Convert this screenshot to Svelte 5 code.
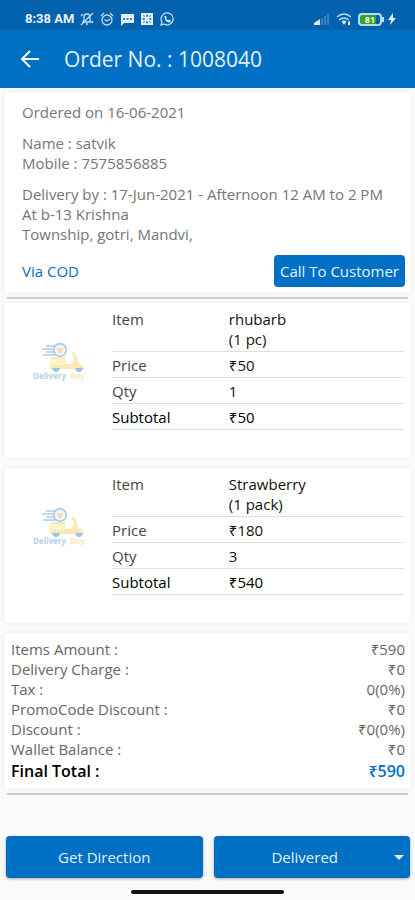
<script lang="ts">
  const items = [
    { name: 'rhubarb', unit: '(1 pc)', price: 50, qty: 1 },
    { name: 'Strawberry', unit: '(1 pack)', price: 180, qty: 3 }
  ];

  const totals = [
    { label: 'Items Amount :', value: '₹590' },
    { label: 'Delivery Charge :', value: '₹0' },
    { label: 'Tax :', value: '0(0%)' },
    { label: 'PromoCode Discount :', value: '₹0' },
    { label: 'Discount :', value: '₹0(0%)' },
    { label: 'Wallet Balance :', value: '₹0' }
  ];

  const statuses = ['Received', 'Processed', 'Shipped', 'Delivered', 'Cancelled'];
  let status = $state('Delivered');
</script>

{#snippet logo()}
  <svg class="logo" viewBox="0 0 54 40" aria-hidden="true">
    <g fill="none" stroke="#a9cdee" stroke-width="1.4">
      <path d="M13 4h10q-3 4 0 9H10M9 7h11M13 10h7" />
      <circle cx="27" cy="8" r="6.3" fill="#f1f8fe" stroke-width="1.8" />
    </g>
    <path d="M24 6q2-1 3 1 2-2 3 0 0 2-3 5-3-2-3-6z" fill="#f9dda0" />
    <path d="M18 15h14v7h6l3-4-2-7q-1-2 1-1 5 3 5 11 6 2 6 6H17v-4q0-5 1-8z" fill="#fce8b6" />
    <path d="M18 17h13v6H17z" fill="#fdf3cc" />
    <path d="M19 26h8q-1 4-4 4t-4-4zM42 26h8q-1 4-4 4t-4-4z" fill="#9cc4e6" />
    <text x="0" y="37" fill="#b4cfe8">Delivery</text>
    <text x="37" y="37" fill="#fbe9bd">Boy</text>
  </svg>
{/snippet}

<div class="screen">
  <div class="status-bar">
    <span class="time">8:38 AM</span>
    <svg class="icon" viewBox="0 0 14 14" aria-hidden="true">
      <path d="M3 10h8l-1-2V5q0-3-3-3T4 5v3zM6 12h2M1 13 13 1M1 4l2-2M13 9l-1 2" />
    </svg>
    <svg class="icon" viewBox="0 0 14 14" aria-hidden="true">
      <circle cx="7" cy="8" r="5" />
      <path d="M1 4l3-3M13 4l-3-3M4.500 7.500 7 9l3-2" />
    </svg>
    <svg class="icon" viewBox="0 0 14 14" aria-hidden="true">
      <path class="solid" d="M1 2h13v9H4l-3 3z" />
      <path class="cut" d="M3 7h2M6.500 7h2M10 7h2" />
    </svg>
    <svg class="icon" viewBox="0 0 14 14" aria-hidden="true">
      <path class="solid" d="M1 1h12v12H1z" />
      <path class="hole" d="M7 2l1 2-1 1-1-1zM7 9l1 1-1 2-1-2zM2 7l2-1 1 1-1 1zM12 7l-2-1-1 1 1 1zM3 3l2 1-1 1zM11 3l-1 2-1-1zM3 11l1-2 1 1zM11 11l-2-1 1-1z" />
    </svg>
    <svg class="icon" viewBox="0 0 14 14" aria-hidden="true">
      <path d="M1 13l1-3a6 6 0 1 1 2 2z" />
      <path class="solid" d="M4.500 4l1.300-.3 1 2-.7.8q.7 1.300 2 1.900l.8-.8 1.900 1q-.2 2-2 1.900Q4.500 9.500 4.500 4z" />
    </svg>
    <span class="spacer"></span>
    <svg class="signal" viewBox="0 0 17 14" aria-hidden="true">
      <path d="M1 13v-2l6-4v6z" fill="#d9e9f5" />
      <path d="M8 13V6h2v7zM11 13V4h2v9zM14 13V2h2v11z" fill="#3a80b9" />
    </svg>
    <svg class="wifi" viewBox="0 0 16 14" aria-hidden="true">
      <path d="M1 5q7-6 14 0M3 8q5-4 10 0M6 10q2-2 4 0" />
      <path class="solid" d="M6 10h4l-2 3zM12 10l2-1v4h-2z" />
    </svg>
    <span class="battery">81</span>
    <svg class="bolt" viewBox="0 0 8 12" aria-hidden="true">
      <path d="M5 0 0 7h3l-1 5 6-7H5z" fill="#e4f1fa" />
    </svg>
  </div>

  <header>
    <button class="back" type="button" aria-label="Back">
      <svg viewBox="0 0 20 20" aria-hidden="true">
        <path d="M19 10H3M10 2 2 10l8 8" />
      </svg>
    </button>
    <h1>Order No. : 1008040</h1>
  </header>

  <main>
    <section class="card details">
      <p>Ordered on 16-06-2021</p>
      <p>Name : satvik<br />Mobile : 7575856885</p>
      <p>
        Delivery by : 17-Jun-2021 - Afternoon 12 AM to 2 PM<br />
        At b-13 Krishna<br />
        Township, gotri, Mandvi,
      </p>
      <div class="payment">
        <span>Via COD</span>
        <button class="call" type="button">Call To Customer</button>
      </div>
    </section>

    <hr />

    {#each items as item}
      <section class="card item">
        <div class="photo">{@render logo()}</div>
        <table>
          <tbody>
            <tr>
              <th>Item</th>
              <td>{item.name}<br />{item.unit}</td>
            </tr>
            <tr>
              <th>Price</th>
              <td>₹{item.price}</td>
            </tr>
            <tr>
              <th>Qty</th>
              <td>{item.qty}</td>
            </tr>
            <tr class="subtotal">
              <th>Subtotal</th>
              <td>₹{item.price * item.qty}</td>
            </tr>
          </tbody>
        </table>
      </section>
    {/each}

    <section class="card totals">
      <dl>
        {#each totals as row}
          <div>
            <dt>{row.label}</dt>
            <dd>{row.value}</dd>
          </div>
        {/each}
        <div class="final">
          <dt>Final Total :</dt>
          <dd>₹590</dd>
        </div>
      </dl>
    </section>

    <hr />
  </main>

  <footer>
    <button class="action" type="button">Get Direction</button>
    <div class="select">
      <select class="action" bind:value={status} aria-label="Order status">
        {#each statuses as option}
          <option>{option}</option>
        {/each}
      </select>
      <span class="caret"></span>
    </div>
  </footer>
  <div class="home-bar"></div>
</div>

<style>
  :global(body) {
    background: #fafafa;
  }
  .screen {
    display: flex;
    flex-direction: column;
    min-height: 100vh;
    font-family: 'Open Sans', 'Noto Sans', sans-serif;
    font-size: 15px;
    line-height: 20px;
    color: #757575;
  }
  button,
  select {
    border: none;
    font: inherit;
    cursor: pointer;
  }

  .status-bar {
    display: flex;
    align-items: center;
    gap: 6px;
    height: 22px;
    padding: 8px 19px 0 25px;
    background: #0362ae;
    color: #e4f1fa;
  }
  .time {
    font-family: Roboto, sans-serif;
    font-size: 13px;
    font-weight: 700;
  }
  .icon {
    width: 14px;
    height: 14px;
  }
  .icon path,
  .icon circle,
  .wifi path {
    fill: none;
    stroke: #c3ddf0;
    stroke-width: 1.3;
  }
  .icon .solid,
  .wifi .solid {
    fill: #e4f1fa;
    stroke: none;
  }
  .icon .cut {
    stroke: #0362ae;
  }
  .icon .hole {
    fill: #0362ae;
    stroke: none;
  }
  .spacer {
    flex: 1;
  }
  .signal {
    width: 17px;
    height: 14px;
  }
  .wifi {
    width: 16px;
    height: 14px;
  }
  .battery {
    position: relative;
    width: 20px;
    height: 9px;
    border: 2px solid #b8dcec;
    border-radius: 4px;
    background: linear-gradient(90deg, #35a02f 80%, #0362ae 80%);
    color: #f4ffe8;
    font-size: 9px;
    font-weight: 700;
    line-height: 9px;
    text-align: center;
  }
  .battery::after {
    content: '';
    position: absolute;
    top: 2px;
    right: -4px;
    width: 2px;
    height: 5px;
    background: #b8dcec;
  }
  .bolt {
    width: 8px;
    height: 12px;
  }

  header {
    display: flex;
    align-items: center;
    gap: 24px;
    height: 58px;
    padding: 0 20px;
    background: #0070c4;
    color: #e4f1fb;
  }
  .back {
    display: flex;
    padding: 0;
    background: none;
  }
  .back svg {
    width: 20px;
    height: 20px;
    fill: none;
    stroke: #fff;
    stroke-width: 2;
  }
  h1 {
    margin: 0;
    font-size: 21px;
    font-weight: 400;
    line-height: 28px;
  }

  main {
    padding: 4px 4px 0;
  }
  .card {
    border-radius: 4px;
    background: #fff;
    box-shadow: 0 0 4px rgba(0, 0, 0, 0.07);
  }
  hr {
    height: 2px;
    margin: 4px 3px;
    border: none;
    background: #cbcbcb;
  }
  .details {
    padding: 10px 6px 6px 18px;
  }
  .details p {
    margin: 0 0 11px;
  }
  .payment {
    display: flex;
    align-items: center;
    justify-content: space-between;
    color: #0070c4;
  }
  .call {
    height: 32px;
    padding: 0 6px;
    border-radius: 4px;
    background: #0070c4;
    color: #e4f1fb;
  }

  .item {
    display: flex;
    margin-bottom: 10px;
    padding: 3px 7px 28px 29px;
  }
  .photo {
    width: 79px;
    padding-top: 36px;
  }
  .logo {
    display: block;
    width: 54px;
    height: 40px;
  }
  .logo text {
    font-family: 'Open Sans', sans-serif;
    font-size: 8px;
    font-weight: 700;
  }
  table {
    flex: 1;
    table-layout: fixed;
    border-spacing: 0;
  }
  th,
  td {
    padding: 3px 0 2px;
    border-bottom: 1px solid #dedede;
    font-weight: 400;
    text-align: left;
    vertical-align: top;
  }
  th {
    width: 40%;
    color: #444;
  }
  td {
    color: #111;
  }
  .subtotal th,
  .subtotal td {
    color: #000;
  }

  .totals {
    padding: 6px 6px 6px 7px;
    color: #666;
  }
  dl,
  dd {
    margin: 0;
  }
  dl div {
    display: flex;
    justify-content: space-between;
  }
  .final {
    color: #000;
    font-size: 16px;
    font-weight: 600;
    line-height: 24px;
  }
  .final dd {
    color: #0070c4;
  }

  footer {
    display: grid;
    grid-template-columns: 1fr 1fr;
    gap: 11px;
    margin-top: auto;
    padding: 0 5px 12px 6px;
  }
  .action {
    width: 100%;
    height: 42px;
    border-radius: 4px;
    background: #0070c4;
    box-shadow: 0 1px 3px rgba(0, 0, 0, 0.35);
    color: #e4f1fb;
  }
  .select {
    position: relative;
  }
  select {
    display: block;
    padding: 0 14px 0 0;
    appearance: none;
    text-align: center;
    text-align-last: center;
  }
  .caret {
    position: absolute;
    top: 19px;
    right: 6px;
    border: 5px solid transparent;
    border-top-color: #e4f1fb;
    border-bottom: none;
    pointer-events: none;
  }
  .home-bar {
    width: 37%;
    height: 4px;
    margin: 0 auto 6px;
    border-radius: 2px;
    background: #111;
  }
</style>
